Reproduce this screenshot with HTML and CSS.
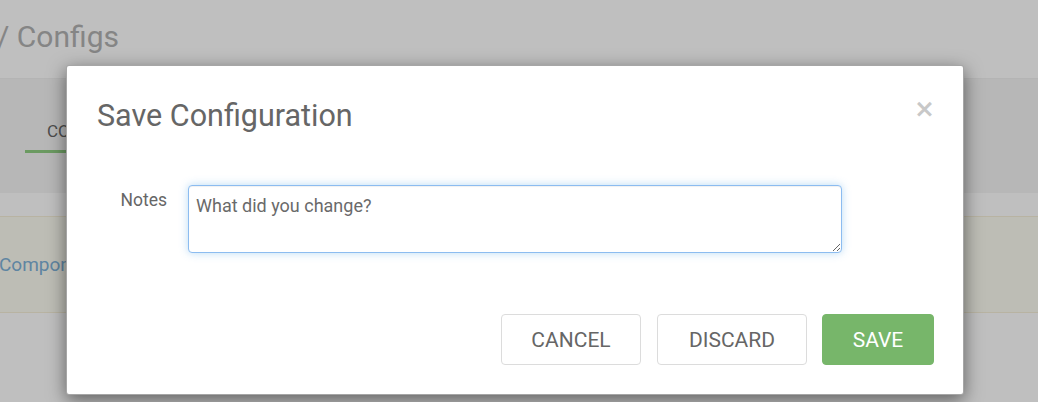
FILE: index.html
```html
<!DOCTYPE html>
<html lang="en">
<head>
<meta charset="utf-8">
<title>Save Configuration</title>
<link rel="stylesheet" href="styles.css">
</head>
<body>
<div class="page">
  <header class="page-header">
    <h1 class="crumbs">/ Configs</h1>
  </header>
  <nav class="tabs">
    <a class="tab tab-active">CONFIGURATION</a>
    <a class="tab">HISTORY</a>
  </nav>
  <div class="spacer"></div>
  <div class="alert">
    <a class="alert-link">Components have unsaved changes</a>
  </div>
</div>

<div class="backdrop"></div>

<div class="modal" role="dialog">
  <div class="modal-header">
    <h2 class="modal-title">Save Configuration</h2>
    <button class="close" aria-label="Close">&times;</button>
  </div>
  <div class="modal-body">
    <label class="field-label" for="notes">Notes</label>
    <textarea id="notes" class="notes" placeholder="What did you change?"></textarea>
  </div>
  <div class="modal-footer">
    <button class="btn btn-default">Cancel</button>
    <button class="btn btn-default btn-discard">Discard</button>
    <button class="btn btn-primary">Save</button>
  </div>
</div>
</body>
</html>
```
FILE: styles.css
```css
html, body {
  margin: 0;
  padding: 0;
}
body {
  width: 1038px;
  height: 402px;
  overflow: hidden;
  position: relative;
  font-family: Roboto, "Liberation Sans", Arial, sans-serif;
  background: #ffffff;
  color: #666666;
}

.page {
  display: flex;
  flex-direction: column;
}

.page-header {
  height: 78px;
  border-bottom: 1px solid #f0f0f0;
  box-sizing: content-box;
}
.crumbs {
  margin: 0;
  padding-top: 19px;
  padding-left: 0;
  text-indent: -3px;
  font-size: 30px;
  line-height: 36px;
  font-weight: 400;
  color: #b2b2b2;
  white-space: nowrap;
}

.tabs {
  height: 114px;
  background: #f5f5f5;
  display: flex;
  align-items: flex-start;
  padding-left: 25px;
}
.tab {
  display: block;
  margin-top: 41px;
  padding: 0 22px 8px;
  font-size: 17px;
  line-height: 22px;
  color: #666666;
  border-bottom: 3px solid transparent;
}
.tab-active {
  border-bottom-color: #8fce82;
}

.spacer {
  height: 23px;
}

.alert {
  height: 95px;
  background: #fdfcf2;
  border-top: 1px solid #f6efd8;
  border-bottom: 1px solid #f6efd8;
  display: flex;
  align-items: center;
  text-indent: -1px;
}
.alert-link {
  font-size: 19px;
  color: #7fb2d8;
  white-space: nowrap;
}

.backdrop {
  position: absolute;
  inset: 0;
  background: rgba(0, 0, 0, 0.25);
}

.modal {
  position: absolute;
  left: 66px;
  top: 65px;
  width: 898px;
  height: 330px;
  box-sizing: border-box;
  background: #ffffff;
  border: 1px solid rgba(0, 0, 0, 0.35);
  border-radius: 3px;
  box-shadow: 0 5px 18px rgba(0, 0, 0, 0.5);
  display: flex;
  flex-direction: column;
}

.modal-header {
  display: flex;
  align-items: flex-start;
  justify-content: space-between;
  padding: 32px 29px 0 30px;
}
.modal-title {
  margin: 0;
  font-size: 30.5px;
  line-height: 36px;
  font-weight: 400;
  color: #666666;
}
.close {
  border: 0;
  background: none;
  padding: 0;
  margin-top: -1px;
  margin-right: -1px;
  font-family: "DejaVu Sans", "Liberation Sans", sans-serif;
  font-size: 25px;
  line-height: 24px;
  font-weight: 700;
  color: #c8c8c8;
}

.modal-body {
  display: flex;
  align-items: flex-start;
  padding: 51px 0 0 0;
}
.field-label {
  width: 121px;
  box-sizing: border-box;
  padding-right: 21px;
  padding-top: 4px;
  text-align: right;
  font-size: 17.5px;
  line-height: 22px;
  color: #666666;
}
.notes {
  width: 654px;
  height: 68px;
  box-sizing: border-box;
  margin: 0;
  padding: 8px 7px 6px;
  border: 1px solid #8cbcf0;
  border-radius: 4px;
  box-shadow: 0 0 8px rgba(102, 175, 233, 0.45), inset 0 1px 1px rgba(0, 0, 0, 0.06);
  outline: none;
  resize: vertical;
  font-family: Roboto, "Liberation Sans", Arial, sans-serif;
  font-size: 18px;
  line-height: 24px;
  color: #666666;
}
.notes::placeholder {
  color: #6a6a6a;
  opacity: 1;
}

.modal-footer {
  margin-top: auto;
  display: flex;
  justify-content: flex-end;
  gap: 16px;
  padding: 0 29px 29px 0;
}
.btn {
  height: 51px;
  box-sizing: border-box;
  padding: 0 20px;
  border-radius: 4px;
  font-family: Roboto, "Liberation Sans", Arial, sans-serif;
  font-size: 21px;
  text-transform: uppercase;
  cursor: pointer;
}
.btn-default {
  width: 140px;
  background: #ffffff;
  border: 1px solid #dcdcdc;
  color: #666666;
}
.btn-discard {
  width: 150px;
}
.btn-primary {
  width: 112px;
  margin-left: -1px;
  background: #77b66a;
  border: 1px solid #77b66a;
  color: #ffffff;
}
```
